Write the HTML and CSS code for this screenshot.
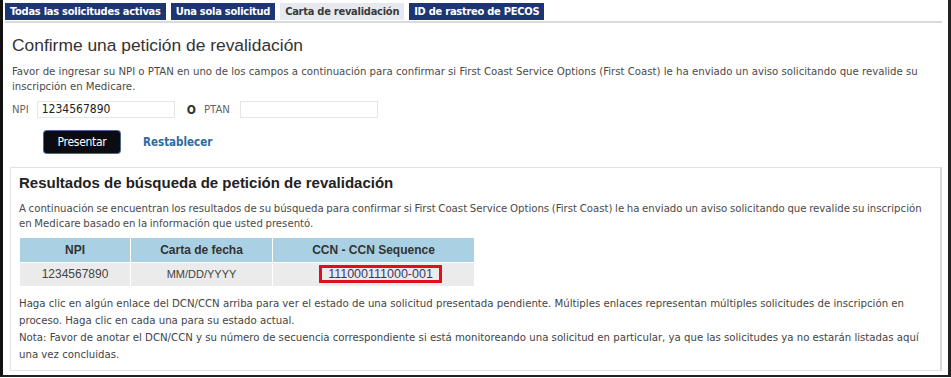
FILE: index.html
```html
<!DOCTYPE html>
<html lang="es">
<head>
<meta charset="utf-8">
<title>Carta de revalidación</title>
<link rel="stylesheet" href="styles.css">
</head>
<body>
<div class="frame">
  <nav class="tabs">
    <span class="tab">Todas las solicitudes activas</span>
    <span class="tab">Una sola solicitud</span>
    <span class="tab active">Carta de revalidación</span>
    <span class="tab">ID de rastreo de PECOS</span>
  </nav>
  <section class="confirm">
    <h1 class="title">Confirme una petición de revalidación</h1>
    <p class="text">Favor de ingresar su NPI o PTAN en uno de los campos a continuación para confirmar si First Coast Service Options (First Coast) le ha enviado un aviso solicitando que revalide su inscripción en Medicare.</p>
    <div class="fields">
      <label class="lbl">NPI</label>
      <span class="input">1234567890</span>
      <span class="or">O</span>
      <label class="lbl">PTAN</label>
      <span class="input"></span>
    </div>
    <div class="actions">
      <span class="btn">Presentar</span>
      <a class="reset">Restablecer</a>
    </div>
  </section>
  <section class="results">
    <h2 class="subtitle">Resultados de búsqueda de petición de revalidación</h2>
    <p class="text lead">A continuación se encuentran los resultados de su búsqueda para confirmar si First Coast Service Options (First Coast) le ha enviado un aviso solicitando que revalide su inscripción en Medicare basado en la información que usted presentó.</p>
    <table class="grid">
      <thead>
        <tr><th class="c1">NPI</th><th class="c2">Carta de fecha</th><th class="c3">CCN - CCN Sequence</th></tr>
      </thead>
      <tbody>
        <tr><td>1234567890</td><td class="date">MM/DD/YYYY</td><td class="ccn-cell"><a class="ccn">111000111000-001</a></td></tr>
      </tbody>
    </table>
    <p class="text notes">Haga clic en algún enlace del DCN/CCN arriba para ver el estado de una solicitud presentada pendiente. Múltiples enlaces representan múltiples solicitudes de inscripción en proceso. Haga clic en cada una para su estado actual.</p>
    <p class="text notes">Nota: Favor de anotar el DCN/CCN y su número de secuencia correspondiente si está monitoreando una solicitud en particular, ya que las solicitudes ya no estarán listadas aquí una vez concluidas.</p>
  </section>
</div>
</body>
</html>
```

FILE: styles.css
```css
* { box-sizing: border-box; }
html, body { margin: 0; padding: 0; background: #fff; }
body { font-family: "DejaVu Sans Condensed", "DejaVu Sans", sans-serif; color: #444; }

.frame {
  width: 951px;
  height: 377px;
  border-left: 3px solid #111;
  border-right: 3px solid #222;
  border-bottom: 2px solid #222;
  padding: 3px 6px 0 2px;
  display: flex;
  flex-direction: column;
}

.tabs {
  display: flex;
  gap: 5px;
  border-bottom: 2px solid #d8dadd;
  padding-bottom: 1px;
}
.tab {
  background: #1d3673;
  color: #fff;
  font-weight: bold;
  font-size: 11px;
  line-height: 17px;
  padding: 0 5px;
  letter-spacing: -0.25px;
}
.tab.active {
  background: #e6eaee;
  color: #3a3a3a;
}

.confirm { padding: 0 0 0 7px; }
.title {
  font-family: "Liberation Sans", Arial, sans-serif;
  font-weight: normal;
  font-size: 17.4px;
  color: #333;
  margin: 13px 0 10px;
  line-height: 18px;
}
.text {
  font-size: 11.3px;
  line-height: 15px;
  margin: 0;
  color: #4a4a4a;
}
.lead { word-spacing: -0.6px; }
.fields {
  display: flex;
  align-items: center;
  margin-top: 7px;
  font-size: 11.3px;
}
.lbl { color: #666; margin-right: 8px; }
.input {
  width: 138px;
  height: 17px;
  border: 1px solid #e3e6ea;
  background: #fff;
  padding: 0 4px;
  line-height: 15px;
  font-size: 12px;
  color: #222;
  margin-right: 12px;
}
.or { font-weight: bold; color: #333; margin-right: 8px; font-size: 12px; }
.or + .lbl { margin-right: 10px; }

.actions {
  display: flex;
  align-items: center;
  gap: 23px;
  margin: 13px 0 0 32px;
}
.btn {
  background: #0b0b14;
  color: #fff;
  border-radius: 3px;
  width: 76px;
  height: 22px;
  font-size: 12px;
  line-height: 22px;
  text-align: center;
  box-shadow: 0 0 0 1px #4a6a90;
  letter-spacing: -0.3px;
}
.reset {
  color: #2d6b9c;
  font-weight: bold;
  font-size: 11.5px;
}

.results {
  margin: 14px 0 4px 5px;
  border: 1px solid #e2e2e2;
  border-right: 2px solid #d8d8d8;
  padding: 6px 4px 0 8px;
  flex: 1;
}
.subtitle {
  font-family: "Liberation Sans", Arial, sans-serif;
  font-size: 15px;
  font-weight: bold;
  color: #222;
  margin: 0 0 9px;
  line-height: 18px;
}
.grid {
  border-collapse: collapse;
  margin-top: 7px;
  width: 456px;
  font-family: "Liberation Sans", Arial, sans-serif;
  font-size: 12px;
}
.grid th {
  background: #a9d0e3;
  color: #333;
  font-weight: bold;
  height: 24px;
  border: 1px solid #fff;
  border-top: 0;
}
.grid td {
  background: #ebebeb;
  color: #444;
  text-align: center;
  height: 24px;
  border: 1px solid #fff;
}
.c1 { width: 111px; }
.c2 { width: 142px; }
.date { font-size: 11px; }
.ccn-cell { padding: 0 0 0 14px; }
.ccn {
  display: inline-block;
  border: 3px solid #e0101a;
  padding: 0 6px;
  font-size: 12.5px;
  line-height: 12px;
  color: #3a3a6a;
}
.notes {
  line-height: 17.3px;
  color: #444;
}
.grid + .notes { margin-top: 8px; }
```
